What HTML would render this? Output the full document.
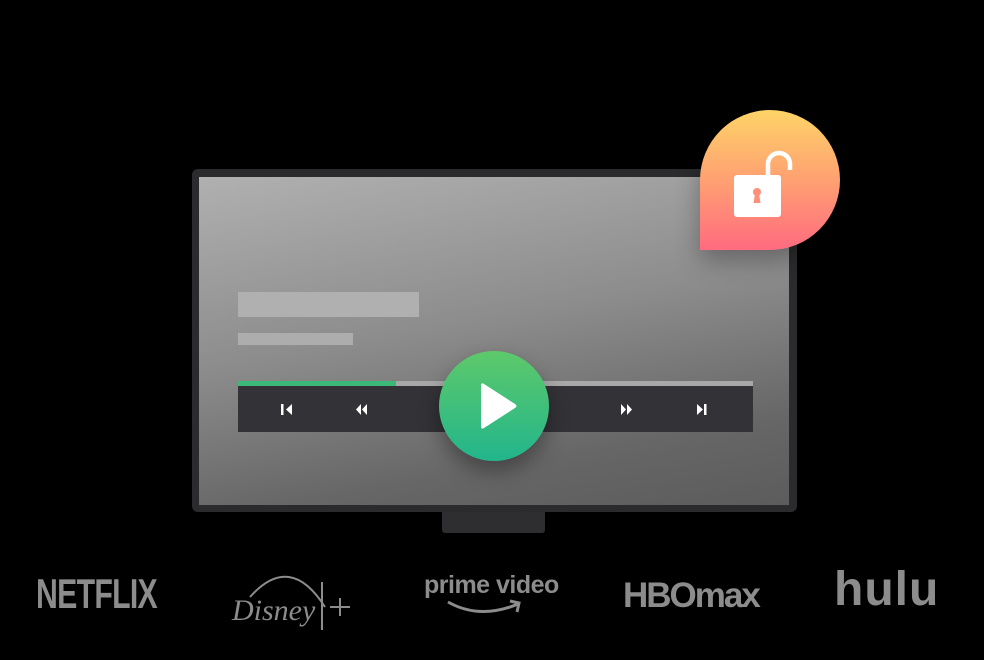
<!DOCTYPE html>
<html><head><style>
body{margin:0;width:984px;height:660px;background:#000;position:relative;overflow:hidden;font-family:"Liberation Sans",sans-serif}
.a{position:absolute}
.logo{position:absolute;color:#8c8c8c;font-weight:bold}
</style></head><body>
<div class="a" style="left:442px;top:505px;width:103px;height:28px;background:#2e2e30;border-radius:0 0 3px 3px"></div>
<div class="a" style="left:192px;top:169px;width:605px;height:343px;background:#2b2b2d;border-radius:6px"></div>
<div class="a" style="left:199px;top:177px;width:590px;height:328px;background:linear-gradient(170deg,#b0b0b0 0%,#8c8c8c 45%,#666 80%,#5c5c5c 100%)"></div>
<div class="a" style="left:238px;top:292px;width:181px;height:25px;background:#b0b0b0"></div>
<div class="a" style="left:238px;top:333px;width:115px;height:12px;background:#adadad"></div>
<div class="a" style="left:238px;top:381px;width:515px;height:5px;background:#a8a8a8"></div>
<div class="a" style="left:238px;top:381px;width:158px;height:5px;background:#3cb878"></div>
<div class="a" style="left:238px;top:386px;width:515px;height:46px;background:#333237"></div>
<svg class="a" style="left:238px;top:386px" width="515" height="46" fill="#fff">
<rect x="43" y="18" width="2.5" height="11"/><path d="M54 18v11l-6-5.5z"/>
<path d="M123 18v11l-5-5.5zM129 18v11l-5-5.5z"/>
<path d="M383 18v11l5-5.5zM389 18v11l5-5.5z"/>
<path d="M459 18v11l6-5.5z"/><rect x="466" y="18" width="2.5" height="11"/>
</svg>
<div class="a" style="left:439px;top:351px;width:110px;height:110px;border-radius:50%;background:linear-gradient(#5ec96a,#22b58c);box-shadow:0 10px 20px rgba(0,0,0,.35)"></div>
<svg class="a" style="left:439px;top:351px" width="110" height="110"><path d="M45 33 Q42 31 42 35 V75 Q42 79 45 77 L76 57 Q79 55 76 53 Z" fill="#fff"/></svg>
<div class="a" style="left:700px;top:110px;width:140px;height:140px;border-radius:50% 50% 50% 0;background:linear-gradient(#fed467,#ff9b73 55%,#ff6b7f);box-shadow:0 10px 25px rgba(0,0,0,.3)"></div>
<svg class="a" style="left:700px;top:110px" width="140" height="140">
<path d="M68 65 V54 a11 11 0 0 1 22 0 V60" stroke="#fff" stroke-width="4.5" fill="none"/>
<rect x="34" y="65" width="47" height="42" rx="3" fill="#fff"/>
<circle cx="57" cy="82" r="4" fill="#ff8f78"/><path d="M55 84h4l1.5 9h-7z" fill="#ff8f78"/>
</svg>
<div class="logo" style="left:36px;top:570px;font-size:42px;letter-spacing:-1px;transform:scaleX(.72);transform-origin:left;font-family:'Liberation Sans Narrow','Liberation Sans',sans-serif">NETFLIX</div>
<svg class="a" style="left:230px;top:562px" width="130" height="70" fill="none" stroke="#8c8c8c" stroke-width="2">
<path d="M20 35 Q60 -10 95 45"/><path d="M92 20 V68"/>
<text x="2" y="58" font-family="Liberation Serif,serif" font-style="italic" font-size="30" fill="#8c8c8c" stroke="none">Disney</text>
<path d="M100 45 h20 M110 36 v18"/>
</svg>
<div class="logo" style="left:424px;top:571px;font-size:25px;letter-spacing:-.5px">prime video</div>
<svg class="a" style="left:440px;top:598px" width="100" height="22" fill="none" stroke="#8c8c8c" stroke-width="3"><path d="M8 4 Q40 22 78 6"/><path d="M70 3 l9 2 -2 9"/></svg>
<div class="logo" style="left:623px;top:576px;font-size:35px;letter-spacing:-2px">HBOmax</div>
<div class="logo" style="left:834px;top:562px;font-size:48px;letter-spacing:1px">hulu</div>
</body></html>
